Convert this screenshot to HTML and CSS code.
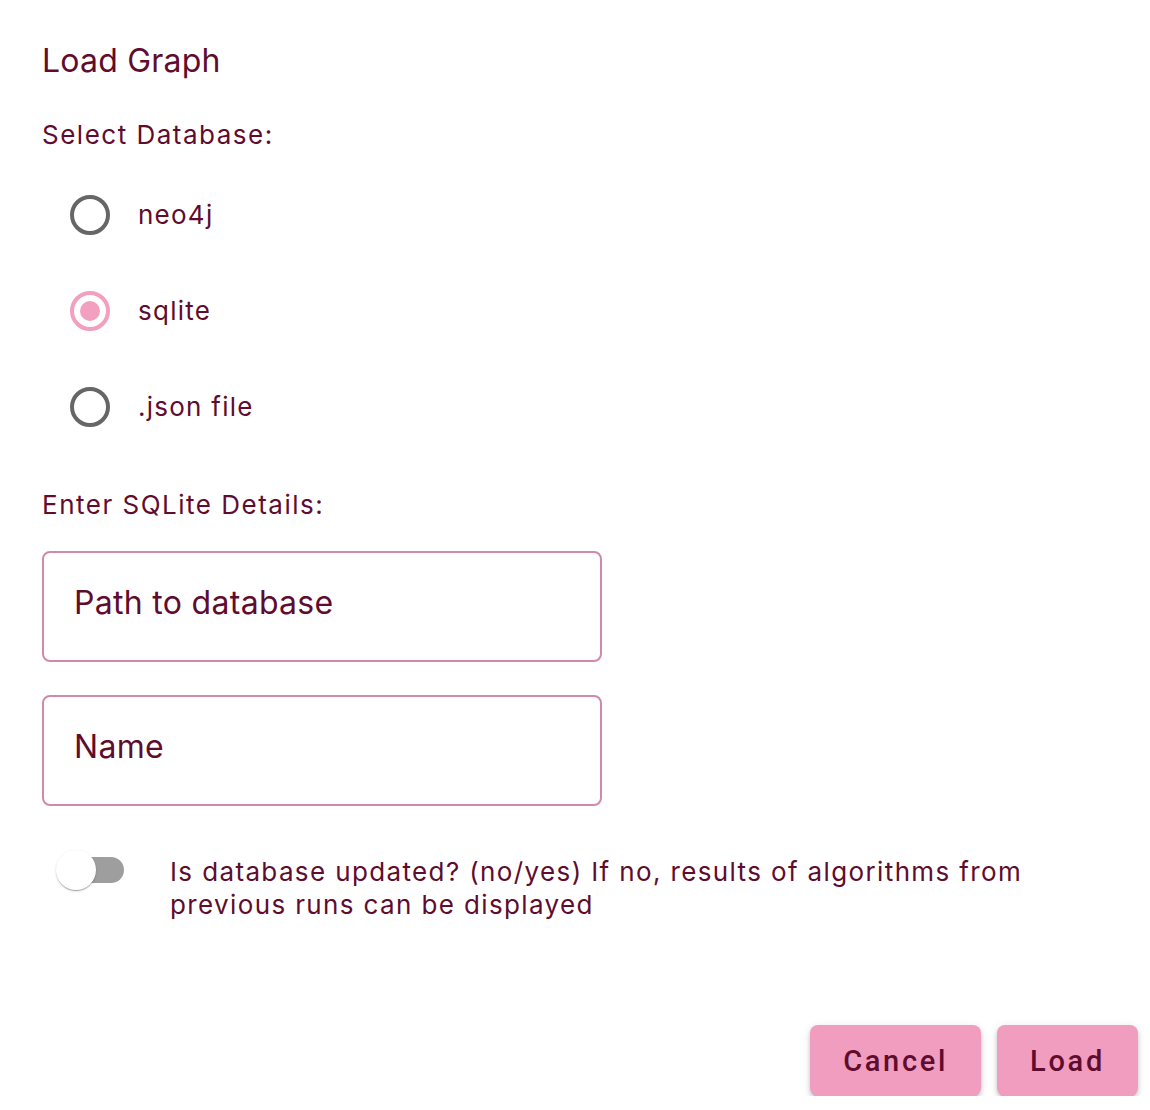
FILE: index.html
```html
<!DOCTYPE html>
<html lang="en">
<head>
<meta charset="utf-8">
<title>Load Graph</title>
<link rel="stylesheet" href="styles.css">
</head>
<body>
<div class="dialog">
  <h1 class="title">Load Graph</h1>
  <div class="section-label">Select Database:</div>
  <div class="radio-group">
    <label class="radio-row">
      <span class="radio"></span>
      <span class="radio-label">neo4j</span>
    </label>
    <label class="radio-row">
      <span class="radio radio-checked"><span class="radio-dot"></span></span>
      <span class="radio-label">sqlite</span>
    </label>
    <label class="radio-row">
      <span class="radio"></span>
      <span class="radio-label">.json file</span>
    </label>
  </div>
  <div class="section-label section-gap">Enter SQLite Details:</div>
  <input class="field" type="text" placeholder="Path to database">
  <input class="field field-second" type="text" placeholder="Name">
  <div class="toggle-row">
    <span class="toggle">
      <span class="toggle-track"></span>
      <span class="toggle-thumb"></span>
    </span>
    <span class="toggle-label">Is database updated? (no/yes) If no, results of algorithms from previous runs can be displayed</span>
  </div>
  <div class="actions">
    <button class="btn" type="button">Cancel</button>
    <button class="btn" type="button">Load</button>
  </div>
</div>
</body>
</html>
```

FILE: styles.css
```css
* { box-sizing: border-box; }

html, body {
  margin: 0;
  padding: 0;
  background: #ffffff;
}

body {
  font-family: Inter, "Noto Sans", "Liberation Sans", sans-serif;
  color: #5f0c2e;
}

.dialog {
  display: flex;
  flex-direction: column;
  padding: 41px 12px 0 42px;
}

.title {
  margin: 0;
  font-size: 32px;
  line-height: 40px;
  font-weight: 400;
  letter-spacing: 0.2px;
}

.section-label {
  margin-top: 38px;
  font-size: 26px;
  line-height: 32px;
  letter-spacing: 1.5px;
}

.section-gap {
  margin-top: 34px;
}

.radio-group {
  display: flex;
  flex-direction: column;
  margin-top: 16px;
}

.radio-row {
  display: flex;
  align-items: center;
  height: 96px;
  padding-left: 28px;
}

.radio {
  width: 40px;
  height: 40px;
  border: 4px solid #666666;
  border-radius: 50%;
  display: flex;
  align-items: center;
  justify-content: center;
  flex: none;
}

.radio-checked {
  border-color: #f29fc0;
}

.radio-dot {
  width: 20px;
  height: 20px;
  border-radius: 50%;
  background: #f29fc0;
}

.radio-label {
  margin-left: 28px;
  font-size: 26px;
  line-height: 34px;
  letter-spacing: 1.25px;
}

.field {
  margin-top: 30px;
  width: 560px;
  height: 111px;
  border: 2px solid #d089a9;
  border-radius: 8px;
  padding: 0 0 9px 30px;
  font-family: Inter, "Noto Sans", "Liberation Sans", sans-serif;
  font-size: 32px;
  letter-spacing: 0.3px;
  color: #5f0c2e;
  background: #ffffff;
  outline: none;
}

.field::placeholder {
  color: #5f0c2e;
  opacity: 1;
}

.field-second {
  margin-top: 33px;
}

.toggle-row {
  display: flex;
  align-items: flex-start;
  margin-top: 49px;
}

.toggle {
  position: relative;
  width: 128px;
  height: 33px;
  flex: none;
}

.toggle-track {
  position: absolute;
  left: 16px;
  top: 2px;
  width: 66px;
  height: 26px;
  border-radius: 13px;
  background: #9e9e9e;
}

.toggle-thumb {
  position: absolute;
  left: 14px;
  top: -5px;
  width: 40px;
  height: 40px;
  border-radius: 50%;
  background: #ffffff;
  box-shadow: 0 2px 1px -1px rgba(0,0,0,0.2), 0 1px 1px 0 rgba(0,0,0,0.14), 0 1px 3px 0 rgba(0,0,0,0.12);
}

.toggle-label {
  max-width: 920px;
  font-size: 26px;
  line-height: 33px;
  letter-spacing: 1.37px;
}

.actions {
  display: flex;
  justify-content: flex-end;
  gap: 16px;
  margin-top: 104px;
}

.btn {
  height: 71px;
  padding: 0 33px 0 33px;
  border: none;
  border-radius: 8px;
  background: #f19dbf;
  color: #5f0c2e;
  font-family: Roboto, "Liberation Sans", sans-serif;
  font-weight: 500;
  font-size: 29px;
  letter-spacing: 2.7px;
  box-shadow: 0 4px 2px -3px rgba(0,0,0,0.2), 0 3px 4px 0 rgba(0,0,0,0.14), 0 2px 8px 0 rgba(0,0,0,0.12);
  cursor: pointer;
}
```
